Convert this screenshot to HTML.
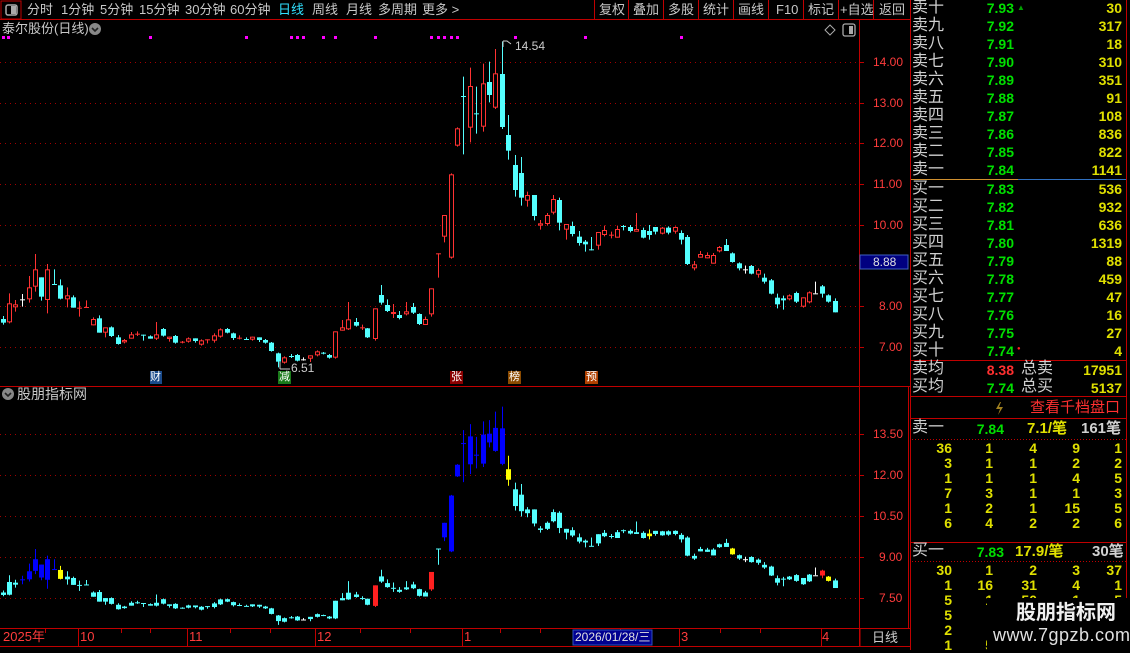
<!DOCTYPE html>
<html><head><meta charset="utf-8">
<style>
*{margin:0;padding:0;box-sizing:border-box}
body{width:1130px;height:650px;background:#000;overflow:hidden;position:relative;font-family:"Liberation Sans","Noto Sans CJK SC",sans-serif;color:#c8c8c8}
.a{position:absolute;white-space:nowrap;line-height:1}
.t{font-size:13px;color:#c8c8c8;top:3px}
.btn{font-size:13px;color:#c8c8c8;top:3px}
.ax{font-size:12px;color:#ff3c3c}
.lb{font-size:16px;color:#d0d0d0;left:912px}
.pr{font-size:14px;color:#00e000;font-weight:bold;text-align:right;width:60px;left:954px}
.vo{font-size:14px;color:#e0e000;font-weight:bold;text-align:right;width:80px;left:1042px}
.g{font-size:14px;color:#e0e000;font-weight:bold;text-align:right;width:30px}
</style></head><body>
<svg id="s" width="1130" height="650" style="position:absolute;left:0;top:0">
<rect x="1" y="1" width="20" height="18" fill="none" stroke="#c00000"/>
<rect x="6" y="5" width="11" height="10" rx="2" fill="none" stroke="#aaa" stroke-width="1.5"/>
<rect x="11" y="6" width="5" height="8" fill="#aaa"/>
<line x1="0" y1="19.5" x2="910" y2="19.5" stroke="#c00000"/>
<g stroke="#c00000">
<line x1="594.5" y1="0" x2="594.5" y2="19"/><line x1="628.5" y1="0" x2="628.5" y2="19"/><line x1="663.5" y1="0" x2="663.5" y2="19"/><line x1="698.5" y1="0" x2="698.5" y2="19"/><line x1="733.5" y1="0" x2="733.5" y2="19"/><line x1="768.5" y1="0" x2="768.5" y2="19"/><line x1="803.5" y1="0" x2="803.5" y2="19"/><line x1="838.5" y1="0" x2="838.5" y2="19"/><line x1="873.5" y1="0" x2="873.5" y2="19"/>
<line x1="859.5" y1="20" x2="859.5" y2="646"/>
<line x1="910.5" y1="0" x2="910.5" y2="650"/>
<line x1="1126.5" y1="0" x2="1126.5" y2="650"/>
<line x1="0" y1="386.5" x2="910" y2="386.5"/>
<line x1="0" y1="628.5" x2="910" y2="628.5"/>
<line x1="0" y1="646.5" x2="910" y2="646.5"/>
<line x1="908.5" y1="386" x2="908.5" y2="628"/>
<line x1="860" y1="628" x2="860" y2="646"/>
<line x1="911" y1="360.5" x2="1126" y2="360.5"/>
<line x1="911" y1="396.5" x2="1126" y2="396.5"/>
<line x1="911" y1="418.5" x2="1126" y2="418.5"/>
<line x1="911" y1="542.5" x2="1126" y2="542.5"/>
</g>
<line x1="911" y1="179.5" x2="1018" y2="179.5" stroke="#d09030"/>
<line x1="1018" y1="179.5" x2="1126" y2="179.5" stroke="#3070c0"/>
<line x1="912" y1="439.5" x2="1126" y2="439.5" stroke="#c00000" stroke-dasharray="1,2"/>
<line x1="912" y1="561.5" x2="1126" y2="561.5" stroke="#c00000" stroke-dasharray="1,2"/>
<g id="grid" stroke="#a00000" stroke-dasharray="1,4"></g>
<g id="ticks" stroke="#c00000"></g>
<g id="dots" fill="#ff00ff"></g>
<g id="c1"></g>
<g id="c2"></g>
<rect x="860" y="255" width="48" height="14" fill="#000080" stroke="#4060c0"/>
<rect x="573" y="630" width="79" height="15" fill="#000090" stroke="#3050c0"/>
<circle cx="95" cy="29" r="6" fill="#888"/><path d="M92 28l3 3 3-3" stroke="#222" stroke-width="1.6" fill="none"/>
<circle cx="8" cy="394" r="6" fill="#888"/><path d="M5 393l3 3 3-3" stroke="#222" stroke-width="1.6" fill="none"/>
<path d="M830 25l5 5-5 5-5-5z" fill="none" stroke="#aaa"/>
<rect x="843" y="24" width="12" height="12" rx="2" fill="none" stroke="#aaa" stroke-width="1.3"/><rect x="849" y="26" width="4" height="8" fill="#aaa"/>
<rect x="150" y="371" width="12" height="13" fill="#1a4a8a"/>
<rect x="278" y="371" width="13" height="13" fill="#1a7a1a"/>
<rect x="450" y="371" width="13" height="13" fill="#8a0000"/>
<rect x="508" y="371" width="13" height="13" fill="#8a4a00"/>
<rect x="585" y="371" width="13" height="13" fill="#b04000"/>
<path d="M503 41v6M503 41h4l4 3" stroke="#ccc" fill="none"/>
<path d="M280 362v7M280 369h10" stroke="#ccc" fill="none"/>
<path d="M1000 402l-4 7h4l-2 6 5-8h-4l2-5z" fill="#a08020"/>
</svg>

<div class="a t" style="left:27px">分时</div>
<div class="a t" style="left:61px">1分钟</div>
<div class="a t" style="left:100px">5分钟</div>
<div class="a t" style="left:139px">15分钟</div>
<div class="a t" style="left:185px">30分钟</div>
<div class="a t" style="left:230px">60分钟</div>
<div class="a t" style="left:278px;color:#30e0ff">日线</div>
<div class="a t" style="left:312px">周线</div>
<div class="a t" style="left:346px">月线</div>
<div class="a t" style="left:378px">多周期</div>
<div class="a t" style="left:422px">更多 &gt;</div>
<div class="a btn" style="left:599px">复权</div>
<div class="a btn" style="left:633px">叠加</div>
<div class="a btn" style="left:668px">多股</div>
<div class="a btn" style="left:703px">统计</div>
<div class="a btn" style="left:738px">画线</div>
<div class="a btn" style="left:776px">F10</div>
<div class="a btn" style="left:808px">标记</div>
<div class="a btn" style="left:840px">+自选</div>
<div class="a btn" style="left:879px">返回</div>

<div class="a" style="left:2px;top:22px;font-size:13px">泰尔股份(日线)</div>
<div class="a" style="left:17px;top:387px;font-size:14px">股朋指标网</div>
<div class="a" style="left:515px;top:40px;font-size:12px;color:#ccc">14.54</div>
<div class="a" style="left:291px;top:362px;font-size:12px;color:#ccc">6.51</div>
<div class="a" style="left:150px;top:372px;font-size:11px;color:#fff">财</div>
<div class="a" style="left:279px;top:372px;font-size:11px;color:#fff">减</div>
<div class="a" style="left:451px;top:372px;font-size:11px;color:#fff">张</div>
<div class="a" style="left:509px;top:372px;font-size:11px;color:#fff">榜</div>
<div class="a" style="left:586px;top:372px;font-size:11px;color:#fff">预</div>

<div class="a ax" style="left:873px;top:56px">14.00</div>
<div class="a ax" style="left:873px;top:97px">13.00</div>
<div class="a ax" style="left:873px;top:137px">12.00</div>
<div class="a ax" style="left:873px;top:178px">11.00</div>
<div class="a ax" style="left:873px;top:219px">10.00</div>
<div class="a" style="left:873px;top:256px;font-size:12px;color:#e0e0e0">8.88</div>
<div class="a ax" style="left:879px;top:300px">8.00</div>
<div class="a ax" style="left:879px;top:341px">7.00</div>
<div class="a ax" style="left:873px;top:428px">13.50</div>
<div class="a ax" style="left:873px;top:469px">12.00</div>
<div class="a ax" style="left:873px;top:510px">10.50</div>
<div class="a ax" style="left:879px;top:551px">9.00</div>
<div class="a ax" style="left:879px;top:592px">7.50</div>

<div class="a ax" style="left:3px;top:630px;font-size:13px">2025年</div>
<div class="a ax" style="left:80px;top:630px;font-size:13px">10</div>
<div class="a ax" style="left:189px;top:630px;font-size:13px">11</div>
<div class="a ax" style="left:317px;top:630px;font-size:13px">12</div>
<div class="a ax" style="left:464px;top:630px;font-size:13px">1</div>
<div class="a" style="left:575px;top:631px;font-size:12px;color:#e0e0e0">2026/01/28/三</div>
<div class="a ax" style="left:681px;top:630px;font-size:13px">3</div>
<div class="a ax" style="left:822px;top:630px;font-size:13px">4</div>
<div class="a" style="left:872px;top:631px;font-size:13px;color:#ccc">日线</div>

<div id="book"></div>

<div class="a" style="left:1030px;top:400px;font-size:15px;color:#ff3030">查看千档盘口</div>

<div style="position:absolute;left:987px;top:598px;width:143px;height:52px;background:#000"></div>
<div class="a" style="left:1016px;top:603px;font-size:20px;font-weight:bold;color:#f0f0f0">股朋指标网</div>
<div class="a" style="left:993px;top:626px;font-size:18px;color:#e0e0e0;letter-spacing:0.5px">www.7gpzb.com</div>

<script>
var NS="http://www.w3.org/2000/svg";
function el(p,tag,at){var e=document.createElementNS(NS,tag);for(var k in at)e.setAttribute(k,at[k]);p.appendChild(e);return e;}
var grid=document.getElementById('grid');
[62,103,143,184,225,265,306,347,434,475,516,557,598].forEach(function(y){el(grid,'line',{x1:0,x2:859,y1:y+.5,y2:y+.5});});
var ticks=document.getElementById('ticks');
[62,103,143,184,225,265,306,347,434,475,516,557,598].forEach(function(y){el(ticks,'line',{x1:860,x2:864,y1:y+.5,y2:y+.5});});
[78,187,315,462,679,821].forEach(function(x){el(ticks,'line',{x1:x+.5,x2:x+.5,y1:629,y2:646});});
[45,121,150,230,270,360,410,500,540,620,720,760].forEach(function(x){el(ticks,'line',{x1:x+.5,x2:x+.5,y1:629,y2:633});});
var dots=document.getElementById('dots');
[2,7,149,245,290,296,302,322,334,374,430,437,443,450,456,514,584,680].forEach(function(x){el(dots,'rect',{x:x,y:36,width:3,height:3});});
var d6=[[10,237,248,'c',228,254],[28,190,247,'r',160,250],[46,193,202,'r',180,215],[66,178,178,'w',162,200],[86,142,178,'r',108,188],[106,88,140,'r',42,155],[124,112,170,'c',112,182],[142,88,180,'r',72,220],[162,132,132,'c',88,132],[181,136,176,'c',118,178],[202,166,178,'r',142,202],[220,172,203,'c',166,203],[238,203,203,'r',184,230],[258,201,201,'r',181,201],[278,237,256,'r',232,256],[298,235,278,'c',226,278],[316,262,278,'r',262,292],[334,262,288,'c'],[355,292,312,'c',285,314],[373,300,307,'r'],[394,283,296,'r',276,296],[412,281,281,'r',274,288],[430,284,284,'c',284,302],[451,289,296,'c',286,296],[469,283,296,'r',246,300],[490,267,287,'c',264,290],[508,290,297,'r',290,305],[526,288,308,'c'],[547,305,305,'r',303,310],[565,295,305,'r'],[586,295,303,'c',295,308],[604,301,314,'r'],[622,298,298,'r',298,310],[643,286,302,'r',280,308],[661,268,290,'r'],[682,267,278,'c',264,280],[700,280,294,'c',278,300],[718,293,293,'r',286,298],[738,297,297,'c',292,300],[757,290,299,'r',290,302],[778,292,300,'c',292,306],[796,300,308,'c'],[814,308,333,'c',306,335],[835,340,365,'c',338,382],[853,352,368,'r'],[872,348,348,'c',342,354],[892,345,362,'c',342,364],[910,358,358,'w',352,362],[931,346,356,'r',346,366],[950,334,346,'r'],[970,338,338,'c',336,343],[988,345,353,'c',342,356],[1006,274,353,'r',274,356],[1027,262,272,'r',240,272],[1045,238,268,'r',186,270],[1067,246,257,'c',234,260],[1085,262,262,'r',254,270],[1102,265,292,'c',264,294],[1124,205,297,'r',205,302],[1142,165,188,'c',135,194],[1162,195,213,'c',178,216],[1180,216,222,'r',192,234],[1198,225,234,'c',213,238],[1218,214,223,'r',186,226],[1238,201,218,'c',189,222],[1258,222,252,'c',220,255]];
var d7=[[16,852,870,'r',845,870],[34,760,838,'r',760,845],[54,655,655,'r',655,728],[72,540,605,'r',540,622],[94,418,668,'r'],[112,280,332,'r'],[130,183,183,'c',125,358],[150,153,278,'r',98,322],[168,235,235,'c',155,296],[190,145,275,'r',86,290],[208,141,180,'c',80,202],[226,115,218,'r',42,222],[247,117,276,'c',20,282],[265,300,347,'c',240,374],[286,390,465,'c',360,485],[304,414,488,'c',366,512],[322,480,497,'r',470,515],[343,480,543,'c',480,556],[361,565,572,'r',555,584],[382,540,567,'r',534,572],[400,492,533,'r',480,538],[418,495,563,'c',488,586],[439,567,584,'r',567,614],[457,573,597,'c',560,604],[478,605,624,'c',588,632],[496,620,628,'c',615,650],[514,643,643,'c',606,646],[535,591,632,'r',591,644],[553,585,600,'r',572,604],[574,599,599,'r',590,610],[592,582,608,'r',572,608],[610,573,573,'c',570,586],[631,576,588,'c',570,592],[649,582,590,'r',534,590],[670,585,608,'c',578,610],[688,588,600,'c',570,614],[706,576,590,'c',576,598],[727,578,596,'r',576,598],[745,578,593,'c',574,598],[766,576,590,'r',574,596],[784,594,614,'c',586,628],[802,606,687,'c',600,690],[823,688,700,'r',678,706],[841,657,668,'r',648,668],[862,660,670,'r',652,670],[880,660,686,'r',654,686],[898,636,649,'r'],[918,630,648,'c',612,648],[937,655,681,'c',652,683],[958,685,700,'c',682,706],[976,703,703,'w',692,716],[994,693,716,'c',690,718],[1015,705,719,'r',700,728],[1033,728,740,'c',716,746],[1054,736,776,'c',732,778],[1072,788,808,'c',776,820],[1090,790,796,'c',782,824],[1108,781,793,'r'],[1129,774,800,'c',770,804],[1150,787,815,'r',787,818],[1168,772,802,'r'],[1186,775,775,'w',740,775],[1207,754,776,'c',750,788],[1225,781,800,'c',778,803],[1246,798,832,'c',790,832]];
var C=[];
function add(arr,ox,oy){arr.forEach(function(a){var t=oy+a[1]/3,b=oy+a[2]/3;var h=a[4]!==undefined?oy+a[4]/3:t-1,l=a[5]!==undefined?oy+a[5]/3:b+1;C.push({x:ox+a[0]/3,t:t,b:b,h:Math.min(h,t),l:Math.max(l,b),c:a[3]});});}
add(d6,0,240);add(d7,420,35);
var col={r:'#ff3232',c:'#54ffff',w:'#ffffff'};
function draw(g,map,lowerColor){C.forEach(function(k){var x=Math.round(k.x),t=map(k.t),b=map(k.b),h=map(k.h),l=map(k.l);var cc=lowerColor?lowerColor(k):col[k.c];var hollow=!lowerColor&&k.c=='r';
el(g,'line',{x1:x+.5,x2:x+.5,y1:h,y2:l,stroke:cc});
if(b-t<1.5){el(g,'line',{x1:x-2,x2:x+3,y1:t+.5,y2:t+.5,stroke:cc});}
else if(hollow){el(g,'rect',{x:x-1.5,y:t+.5,width:4,height:b-t-1,fill:'#000',stroke:cc});}
else{el(g,'rect',{x:x-2,y:t,width:5,height:b-t,fill:cc});}});}
draw(document.getElementById('c1'),function(y){return y;});
draw(document.getElementById('c2'),function(y){return 420.3+(y-62)*0.67;},function(k){
var x=k.x;
if([60,507,650,730,828].some(function(v){return Math.abs(v-x)<3;}))return '#ffff00';
if([373,430,820].some(function(v){return Math.abs(v-x)<3;}))return '#ff2020';
if((x>440&&x<505)||(x>18&&x<56))return '#0000ff';
if(k.c=='w')return '#ffffff';
return '#54ffff';});
var bk=document.getElementById('book'),h='';
function D(cls,l,t,txt,st){h+='<div class="a '+cls+'" style="'+(l!==null?'left:'+l+'px;':'')+'top:'+t+'px;'+(st||'')+'">'+txt+'</div>';}
var sell=[['卖十','7.93','30'],['卖九','7.92','317'],['卖八','7.91','18'],['卖七','7.90','310'],['卖六','7.89','351'],['卖五','7.88','91'],['卖四','7.87','108'],['卖三','7.86','836'],['卖二','7.85','822'],['卖一','7.84','1141']];
var buy=[['买一','7.83','536'],['买二','7.82','932'],['买三','7.81','636'],['买四','7.80','1319'],['买五','7.79','88'],['买六','7.78','459'],['买七','7.77','47'],['买八','7.76','16'],['买九','7.75','27'],['买十','7.74','4']];
sell.forEach(function(r,i){var y=i*18;D('lb',null,y,r[0]);D('pr',null,y+1,r[1]);D('vo',null,y+1,r[2]);});
buy.forEach(function(r,i){var y=181+i*18;D('lb',null,y,r[0]);D('pr',null,y+1,r[1]);D('vo',null,y+1,r[2]);});
D('a',1017,4,'▲','font-size:8px;color:#00a000');
D('a',1017,346,'●','font-size:6px;color:#ff2020');
D('lb',null,361,'卖均');D('pr',null,363,'8.38','color:#ff3030');D('lb',1021,361,'总卖');D('vo',null,363,'17951');
D('lb',null,379,'买均');D('pr',null,381,'7.74');D('lb',1021,379,'总买');D('vo',null,381,'5137');
D('lb',null,420,'卖一');D('pr',944,422,'7.84');D('a',1027,421,'7.1/笔','font-size:15px;color:#e0e000;font-weight:bold');D('a',1081,421,'161笔','font-size:15px;color:#d0d0d0;font-weight:bold');
D('lb',null,543,'买一');D('pr',944,545,'7.83');D('a',1015,544,'17.9/笔','font-size:15px;color:#e0e000;font-weight:bold');D('a',1092,544,'30笔','font-size:15px;color:#d0d0d0;font-weight:bold');
var cx=[952,993,1037,1080,1122];
var gs=[[36,1,4,9,1],[3,1,1,2,2],[1,1,1,4,5],[7,3,1,1,3],[1,2,1,15,5],[6,4,2,2,6]];
gs.forEach(function(r,i){r.forEach(function(v,j){D('g',cx[j]-30,441+i*15,v);});});
var gb=[[30,1,2,3,37],[1,16,31,4,1],[5,1,50,1,5],[5,'','','',''],[2,'','','',''],[1,5,'','','']];
gb.forEach(function(r,i){r.forEach(function(v,j){if(v!=='')D('g',cx[j]-30,563+i*15,v);});});
bk.innerHTML=h;
</script>
</body></html>
